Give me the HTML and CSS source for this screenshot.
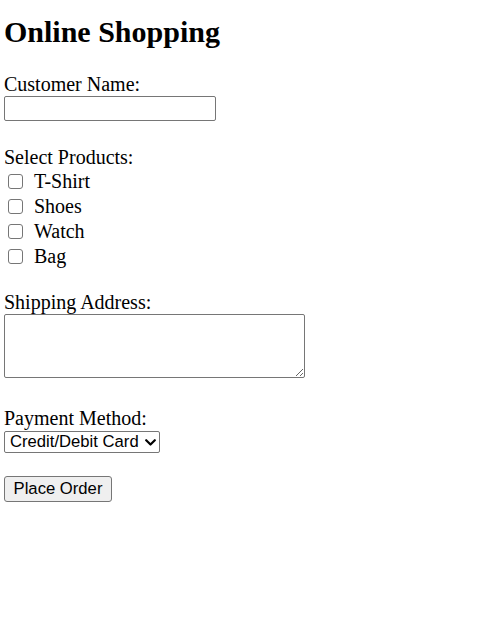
FILE: index.html
```html
<!DOCTYPE html>
<html>
<head>
<meta charset="utf-8">
<title>Online Shopping</title>
<link rel="stylesheet" href="styles.css">
</head>
<body>
<h1 class="title">Online Shopping</h1>
<form class="order-form">
  <div class="group group-name">
    <label class="field-label" for="name">Customer Name:</label>
    <input class="text-input" type="text" id="name">
  </div>
  <div class="group group-products">
    <div class="field-label">Select Products:</div>
    <div class="checks">
      <label class="check-row"><input class="check" type="checkbox"><span>T-Shirt</span></label>
      <label class="check-row"><input class="check" type="checkbox"><span>Shoes</span></label>
      <label class="check-row"><input class="check" type="checkbox"><span>Watch</span></label>
      <label class="check-row"><input class="check" type="checkbox"><span>Bag</span></label>
    </div>
  </div>
  <div class="group group-address">
    <label class="field-label" for="addr">Shipping Address:</label>
    <textarea class="area" id="addr"></textarea>
  </div>
  <div class="group group-payment">
    <label class="field-label" for="pay">Payment Method:</label>
    <div class="select-wrap">
      <select class="pay-select" id="pay">
        <option>Credit/Debit Card</option>
        <option>PayPal</option>
        <option>Cash on Delivery</option>
      </select>
      <svg class="chevron" width="11" height="7" viewBox="0 0 11 7" aria-hidden="true">
        <path d="M1.2 1.2 L5.5 5.5 L9.8 1.2" fill="none" stroke="#000" stroke-width="2.2" stroke-linecap="round" stroke-linejoin="round"/>
      </svg>
    </div>
  </div>
  <button class="submit" type="button">Place Order</button>
</form>
</body>
</html>
```

FILE: styles.css
```css
html, body {
  background: #ffffff;
}
body {
  margin: 0;
  padding: 0 4px;
  font-family: "Liberation Serif", "Times New Roman", serif;
  font-size: 20px;
  color: #000000;
}
.title {
  margin: 15px 0 24px;
  font-size: 30px;
  line-height: 34px;
  font-weight: bold;
}
.order-form {
  display: flex;
  flex-direction: column;
  align-items: flex-start;
}
.group {
  display: flex;
  flex-direction: column;
  align-items: flex-start;
}
.group-name {
  margin-bottom: 25px;
}
.group-products {
  margin-bottom: 22px;
}
.group-address {
  margin-bottom: 29px;
}
.group-payment {
  margin-bottom: 23px;
}
.field-label {
  display: block;
  line-height: 23px;
  height: 23px;
}
.text-input {
  box-sizing: border-box;
  width: 212px;
  height: 25px;
  margin: 0;
  padding: 1px 3px;
  border: 1px solid #767676;
  border-radius: 2px;
  font-family: "Liberation Sans", Arial, sans-serif;
  font-size: 16.67px;
  background: #ffffff;
}
.checks {
  display: flex;
  flex-direction: column;
}
.check-row {
  display: flex;
  align-items: center;
  height: 25px;
  line-height: 25px;
}
.check {
  appearance: none;
  -webkit-appearance: none;
  box-sizing: border-box;
  flex: none;
  width: 15px;
  height: 15px;
  margin: 0 11px 0 4px;
  border: 1px solid #767676;
  border-radius: 3px;
  background: #ffffff;
}
.area {
  box-sizing: border-box;
  width: 301px;
  height: 64px;
  margin: 0;
  padding: 2px;
  border: 1px solid #767676;
  border-radius: 2px;
  font-family: "Liberation Mono", monospace;
  font-size: 16px;
  background: #ffffff;
}
.select-wrap {
  position: relative;
  margin-top: 1px;
}
.pay-select {
  appearance: none;
  -webkit-appearance: none;
  display: block;
  box-sizing: border-box;
  width: 156px;
  height: 22px;
  margin: 0;
  padding: 0 0 0 5px;
  border: 1px solid #767676;
  border-radius: 2px;
  font-family: "Liberation Sans", Arial, sans-serif;
  font-size: 16.67px;
  line-height: 20px;
  color: #000000;
  background: #ffffff;
}
.chevron {
  position: absolute;
  right: 4px;
  top: 8px;
  pointer-events: none;
}
.submit {
  box-sizing: border-box;
  width: 108px;
  height: 26px;
  margin: 0;
  padding: 0;
  border: 1px solid #767676;
  border-radius: 3px;
  background: #efefef;
  font-family: "Liberation Sans", Arial, sans-serif;
  font-size: 16.67px;
  color: #000000;
}
```
